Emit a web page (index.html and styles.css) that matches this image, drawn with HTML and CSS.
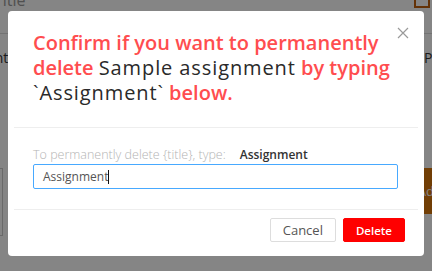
FILE: index.html
```html
<!DOCTYPE html>
<html lang="en">

<head>
  <meta charset="UTF-8" />
  <title>Delete assignment</title>
  <link rel="stylesheet" href="styles.css">
</head>

<body>
  <div class="page">
    <div class="page-head">
      <span class="page-title">Title</span>
      <span class="page-icon"></span>
    </div>
    <div class="page-row">
      <span class="frag">Content</span>
      <span class="frag right">Publish</span>
    </div>
    <div class="page-row low">
      <span class="frag">Sub</span>
    </div>
    <div class="page-row tools">
      <span class="side-box"></span>
      <span class="add-btn">Add</span>
    </div>
  </div>

  <div class="mask">
    <div class="modal">
      <button class="close" aria-label="Close">
        <svg width="12" height="12" viewBox="0 0 12 12">
          <path d="M1 1L11 11M11 1L1 11" stroke="#9a9a9a" stroke-width="1.2" fill="none" />
        </svg>
      </button>

      <div class="modal-header">
        <div class="modal-title">
          Confirm if you want to permanently delete <span class="dark">Sample assignment</span>
          by typing <span class="dark">`Assignment`</span> below.
        </div>
      </div>

      <div class="modal-body">
        <div class="hint">
          <span>To permanently delete {title}, type:</span>
          <strong>Assignment</strong>
        </div>
        <div class="confirm-input">Assignment<span class="caret"></span></div>
      </div>

      <div class="modal-footer">
        <button class="btn">Cancel</button>
        <button class="btn danger">Delete</button>
      </div>
    </div>
  </div>
</body>

</html>
```

FILE: styles.css
```css
body {
  margin: 0;
  font-family: "Open Sans", sans-serif;
  background-color: #fff;
  width: 432px;
  height: 271px;
  overflow: hidden;
}

.page {
  height: 271px;
  overflow: hidden;
}

.page-head {
  height: 33px;
  display: flex;
  justify-content: space-between;
  border-bottom: 1px solid #ddd;
}

.page-title {
  font-size: 16px;
  line-height: 16px;
  color: #999;
  margin-top: -8px;
  margin-left: -6px;
}

.page-icon {
  width: 12px;
  height: 6px;
  border: 2px solid #c0600c;
  border-top: none;
  margin-right: 2px;
}

.page-row {
  display: flex;
  justify-content: space-between;
  padding-top: 14px;
  font-size: 14px;
  color: #333;
}

.frag {
  margin-left: -44px;
}

.frag.right {
  margin-left: 0;
  margin-right: -40px;
}

.page-row.low {
  padding-top: 38px;
}

.page-row.tools {
  padding-top: 44px;
  align-items: flex-start;
}

.side-box {
  width: 10px;
  height: 66px;
  border: 1px solid #ccc;
  margin-left: -9px;
}

.add-btn {
  background-color: #d9770b;
  color: #fff;
  padding: 14px 10px 14px 8px;
  margin-right: -20px;
  font-size: 13px;
}

.mask {
  position: fixed;
  inset: 0;
  background-color: rgba(0, 0, 0, 0.48);
  padding: 11px 8px 0 8px;
}

.modal {
  position: relative;
  width: 416px;
  background-color: #fff;
  border-radius: 4px;
}

.close {
  position: absolute;
  top: 16px;
  right: 15px;
  border: none;
  background: none;
  padding: 0;
  cursor: pointer;
}

.modal-header {
  margin: 0 6px;
  padding: 19px 10px 22px 19px;
  border-bottom: 1px solid #eee;
}

.modal-title {
  font-size: 20px;
  line-height: 25px;
  font-weight: 600;
  color: #ff4d4f;
}

.dark {
  color: #2a2a2a;
  font-weight: 500;
  letter-spacing: 0.9px;
}

.modal-body {
  padding: 20px 26px 20px 25px;
}

.hint {
  font-size: 12.5px;
  line-height: 14px;
  font-weight: 300;
  color: #b4b4b4;
  display: flex;
  gap: 14px;
  margin-bottom: 2px;
}

.hint strong {
  font-size: 12px;
  color: #333;
  font-weight: 600;
}

.confirm-input {
  height: 23px;
  border: 1px solid #48a9ff;
  border-radius: 2px;
  font-size: 12px;
  color: #555;
  padding-left: 9px;
  display: flex;
  align-items: center;
}

.caret {
  width: 1px;
  height: 14px;
  background-color: #111;
}

.modal-footer {
  margin: 0 6px;
  border-top: 1px solid #eee;
  padding: 8px 13px 14px 0;
  display: flex;
  justify-content: flex-end;
  gap: 7px;
}

.btn {
  height: 24px;
  padding: 0 12px;
  font-family: "Open Sans", sans-serif;
  font-size: 13px;
  color: #555;
  background-color: #fff;
  border: 1px solid #ddd;
  border-radius: 2px;
  cursor: pointer;
}

.btn.danger {
  font-size: 11.5px;
  background-color: #ff0000;
  border-color: #ff0000;
  color: #fff;
  font-weight: 600;
}
```
